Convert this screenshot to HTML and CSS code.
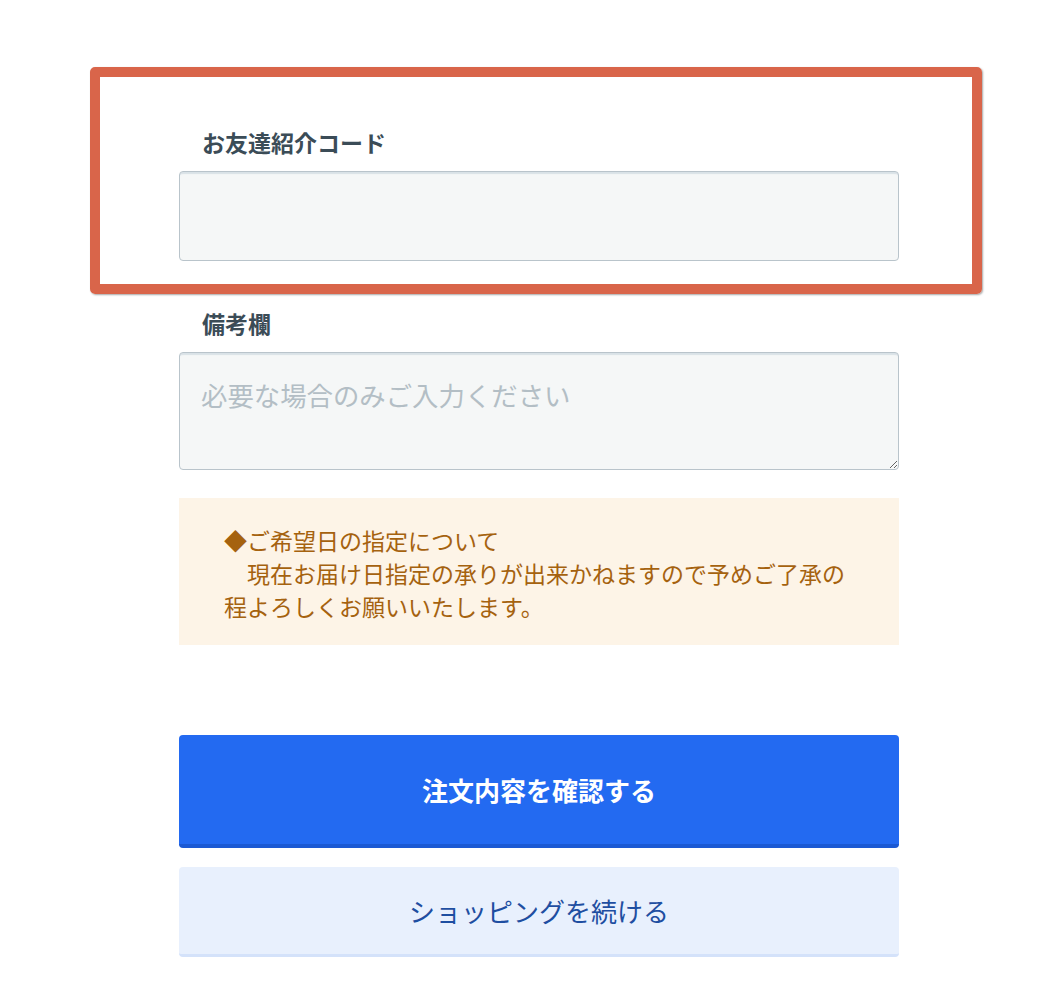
FILE: index.html
```html
<!DOCTYPE html>
<html lang="ja">
<head>
<meta charset="utf-8">
<title>注文フォーム</title>
<link rel="stylesheet" href="styles.css">
</head>
<body>
<div class="highlight"></div>
<main class="form">
  <label class="label" for="friend">お友達紹介コード</label>
  <input class="field" id="friend" type="text">
  <label class="label label-note" for="note">備考欄</label>
  <textarea class="field area" id="note" placeholder="必要な場合のみご入力ください"></textarea>
  <div class="notice">◆ご希望日の指定について<br>　現在お届け日指定の承りが出来かねますので予めご了承の程よろしくお願いいたします。</div>
  <button class="btn btn-primary" type="button">注文内容を確認する</button>
  <button class="btn btn-secondary" type="button">ショッピングを続ける</button>
</main>
</body>
</html>
```
FILE: styles.css
```css
html, body {
  margin: 0;
  padding: 0;
  background: #ffffff;
}
body {
  font-family: "Noto Sans CJK JP", "Noto Sans", sans-serif;
  color: #3b4c57;
}
.highlight {
  position: absolute;
  left: 90px;
  top: 67px;
  width: 892px;
  height: 227px;
  box-sizing: border-box;
  border: 10px solid #d9654a;
  border-radius: 5px;
  box-shadow: 1px 1px 2px rgba(0, 0, 0, 0.35);
  pointer-events: none;
}
.form {
  width: 720px;
  margin: 0 0 0 179px;
  padding-top: 125px;
  display: flex;
  flex-direction: column;
}
.label {
  display: block;
  font-size: 23px;
  font-weight: 700;
  line-height: 34px;
  padding-left: 23px;
  color: #3b4c57;
  margin-bottom: 12px;
}
.label-note {
  margin-top: 45px;
}
.field {
  box-sizing: border-box;
  width: 720px;
  height: 90px;
  margin: 0;
  border: 1px solid #b9c4cb;
  border-radius: 4px;
  background: #f5f7f7;
  box-shadow: inset 0 3px 1px -1px rgba(185, 200, 210, 0.45);
  font-family: inherit;
  font-size: 26.4px;
  color: #3b4c57;
  outline: none;
  padding: 0 21px;
}
.area {
  height: 118px;
  padding: 22px 21px 0;
  line-height: 39px;
  resize: vertical;
  display: block;
}
.area::placeholder {
  color: #b3bec5;
}
.notice {
  margin-top: 28px;
  background: #fdf4e7;
  color: #a5620f;
  font-size: 23px;
  line-height: 33px;
  padding: 26px 45px 22px 45px;
}
.btn {
  box-sizing: border-box;
  width: 720px;
  border: 0;
  border-radius: 4px;
  font-family: inherit;
  font-size: 26px;
  cursor: pointer;
  margin: 0;
  padding: 0;
}
.btn-primary {
  margin-top: 90px;
  height: 113px;
  background: #236af1;
  border-bottom: 4px solid #1b59d3;
  color: #ffffff;
  font-weight: 700;
}
.btn-secondary {
  margin-top: 19px;
  height: 90px;
  background: #e8f0fd;
  border-bottom: 3px solid #d4e2fa;
  color: #1e4ea1;
  font-weight: 400;
}
```
